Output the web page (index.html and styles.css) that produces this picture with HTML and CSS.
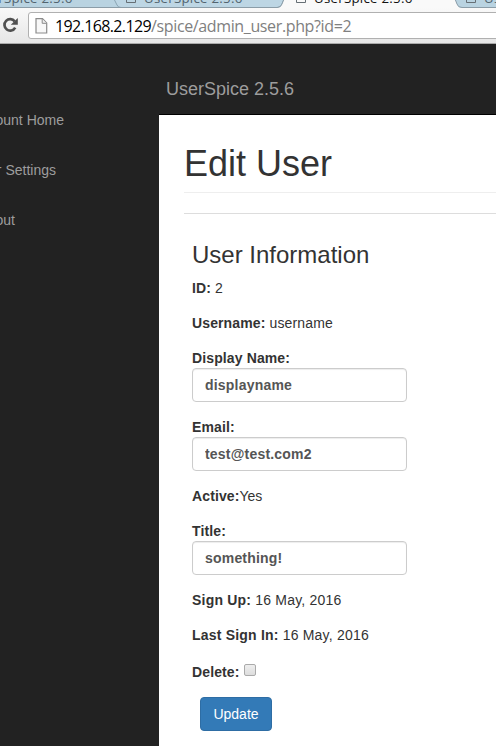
FILE: index.html
```html
<!DOCTYPE html>
<html lang="en">
<head>
<meta charset="utf-8">
<title>UserSpice 2.5.6</title>
<link rel="stylesheet" href="styles.css">
</head>
<body>
<header class="browser">
  <div class="tabs">
    <svg class="tab-shapes" width="496" height="8" viewBox="0 0 496 8">
      <rect width="496" height="8" fill="#b9d3e1"/>
      <path d="M114 -1L117 5Q118 7.500 121 7.500H278Q281 7 282 4L284 -1" fill="#bdd6e4" stroke="#8ba5b3"/>
      <path d="M284 -1L282 4Q281 7.500 277 8H461Q458 7.500 457 4L455 -1Z" fill="#f9f9f9"/>
      <path d="M284 -1L282 4Q281 7.500 277 7.500H0M455 -1L457 4Q458 7.500 462 7.500H496" fill="none" stroke="#8b9da8"/>
      <path d="M126.500 -2V2.500H135.500V-2M296.500 -2V2.500H305.500V-2M466.500 -2V2.500H475.500V-2" fill="none" stroke="#666f75"/>
    </svg>
    <div class="tab-titles">
      <span class="tab-title">UserSpice 2.5.6</span>
      <span class="tab-title">UserSpice 2.5.6</span>
      <span class="tab-title tab-active">UserSpice 2.5.6</span>
      <span class="tab-title">UserSpice 2.5.6</span>
    </div>
  </div>
  <div class="toolbar">
    <svg class="reload" width="17" height="18" viewBox="0 0 17 18">
      <path d="M13.200 11.600A5.700 5.700 0 1 1 12.700 5.400" fill="none" stroke="#505050" stroke-width="2.700"/>
      <path d="M15.800 2V8.800H8.800Z" fill="#505050"/>
    </svg>
    <div class="address">
      <svg width="13" height="16" viewBox="0 0 13 16">
        <path d="M1 .7H7.500L11.700 5V15H1Z" fill="#f8f8f8" stroke="#8b8b8b" stroke-width="1.200"/>
        <path d="M7.200 1V5.300H11.700" fill="#eee" stroke="#8b8b8b"/>
      </svg>
      <span class="url"><span class="host">192.168.2.129</span>/spice/admin_user.php?id=2</span>
    </div>
  </div>
</header>
<div class="page">
  <nav class="sidebar">
    <a>Account Home</a>
    <a>User Settings</a>
    <a>Logout</a>
  </nav>
  <div class="main">
    <div class="brand"><span>UserSpice 2.5.6</span></div>
    <main class="content">
      <h1><span>Edit User</span></h1>
      <hr>
      <form class="info">
        <h2><span>User Information</span></h2>
        <p><b>ID:</b> 2</p>
        <p class="username"><b>Username:</b> username</p>
        <div class="field"><label>Display Name:</label><input type="text" value="displayname"></div>
        <div class="field"><label>Email:</label><input class="email" type="text" value="test@test.com2"></div>
        <p><b>Active:</b>Yes</p>
        <div class="field"><label>Title:</label><input type="text" value="something!"></div>
        <p class="date"><b>Sign Up:</b> 16 May, 2016</p>
        <p class="date"><b>Last Sign In:</b> 16 May, 2016</p>
        <p class="delete"><b>Delete:</b><input class="check" type="checkbox"></p>
        <button type="button">Update</button>
      </form>
    </main>
  </div>
</div>
</body>
</html>
```
FILE: styles.css
```css
* { box-sizing: border-box; }
body {
  margin: 0;
  width: 496px;
  height: 746px;
  overflow: hidden;
  background: #222;
  color: #333;
  font: 14px/20px "Liberation Sans", Arial, sans-serif;
}
.browser { height: 44px; background: #f2f2f2; }
.tabs { position: relative; height: 8px; overflow: hidden; }
.tab-shapes { display: block; }
.tab-titles {
  position: absolute;
  left: -26px;
  top: -12px;
  display: flex;
  font: 13.3px/20px "Open Sans", sans-serif;
  letter-spacing: .25px;
  color: #52646f;
}
.tab-title { flex: none; width: 170px; }
.tab-active { color: #111; }
.toolbar {
  display: flex;
  align-items: flex-start;
  height: 36px;
  padding-top: 4px;
  background: linear-gradient(#f9f9f9, #e6e6e6);
  border-bottom: 1px solid #aaa;
}
.reload { flex: none; margin: 4px 9px 0 2px; }
.address {
  display: flex;
  align-items: center;
  flex: none;
  width: 480px;
  height: 27px;
  padding-left: 6px;
  background: #fff;
  border: 1px solid #b0b0b0;
  border-radius: 3px;
}
.url {
  margin-left: 7px;
  font: 16px/24px "Open Sans", sans-serif;
  letter-spacing: -.37px;
  color: #808080;
  white-space: nowrap;
}
.host { color: #000; letter-spacing: -.62px; }
.page { display: flex; height: 702px; }
.sidebar {
  display: flex;
  flex-direction: column;
  align-items: flex-end;
  gap: 30px;
  width: 159px;
  padding-top: 66px;
  color: #9d9d9d;
}
.sidebar a { white-space: nowrap; }
.sidebar a:nth-child(1) { margin-right: 95px; }
.sidebar a:nth-child(2) { margin-right: 103px; }
.sidebar a:nth-child(3) { margin-right: 144px; }
.main { width: 337px; }
.brand {
  height: 71px;
  padding: 35px 7px 0;
  border-bottom: 1px solid #000;
  font-size: 18px;
  color: #9d9d9d;
}
.content { height: 631px; padding: 29px 0 0 25px; background: #fff; }
h1, h2 { margin: 0; font-weight: 400; }
h1 { height: 49px; border-bottom: 1px solid #eee; font-size: 36px; line-height: 40px; }
hr { height: 1px; margin: 20px 0 0; border: 0; background: #ddd; }
.info {
  display: flex;
  flex-direction: column;
  align-items: flex-start;
  gap: 15px;
  padding: 28px 0 0 8px;
}
h2 { height: 26px; margin-bottom: -5px; font-size: 24px; line-height: 26px; }
p { margin: 0; }
b, label { letter-spacing: .12px; }
.username { letter-spacing: .15px; }
.date, .date b { letter-spacing: .2px; }
.field { display: flex; flex-direction: column; align-items: flex-start; }
label { font-weight: 700; }
input[type="text"] {
  width: 215px;
  height: 34px;
  padding: 6px 12px;
  border: 1px solid #ccc;
  border-radius: 4px;
  background: #fff;
  box-shadow: inset 0 1px 1px rgba(0, 0, 0, .075);
  color: #555;
  font: 700 14px/20px "Liberation Sans", Arial, sans-serif;
  letter-spacing: .2px;
}
.delete { display: flex; margin-top: 2px; }
.check {
  appearance: none;
  width: 12px;
  height: 12px;
  margin: 2px 0 0 4px;
  border: 1px solid #aaa;
  border-radius: 2px;
  background: linear-gradient(#eee, #ddd);
}
button {
  width: 72px;
  height: 34px;
  margin-left: 8px;
  padding: 0;
  border: 1px solid #2e6da4;
  border-radius: 4px;
  background: #337ab7;
  color: #fff;
  font: 14px/20px "Liberation Sans", Arial, sans-serif;
}
```
